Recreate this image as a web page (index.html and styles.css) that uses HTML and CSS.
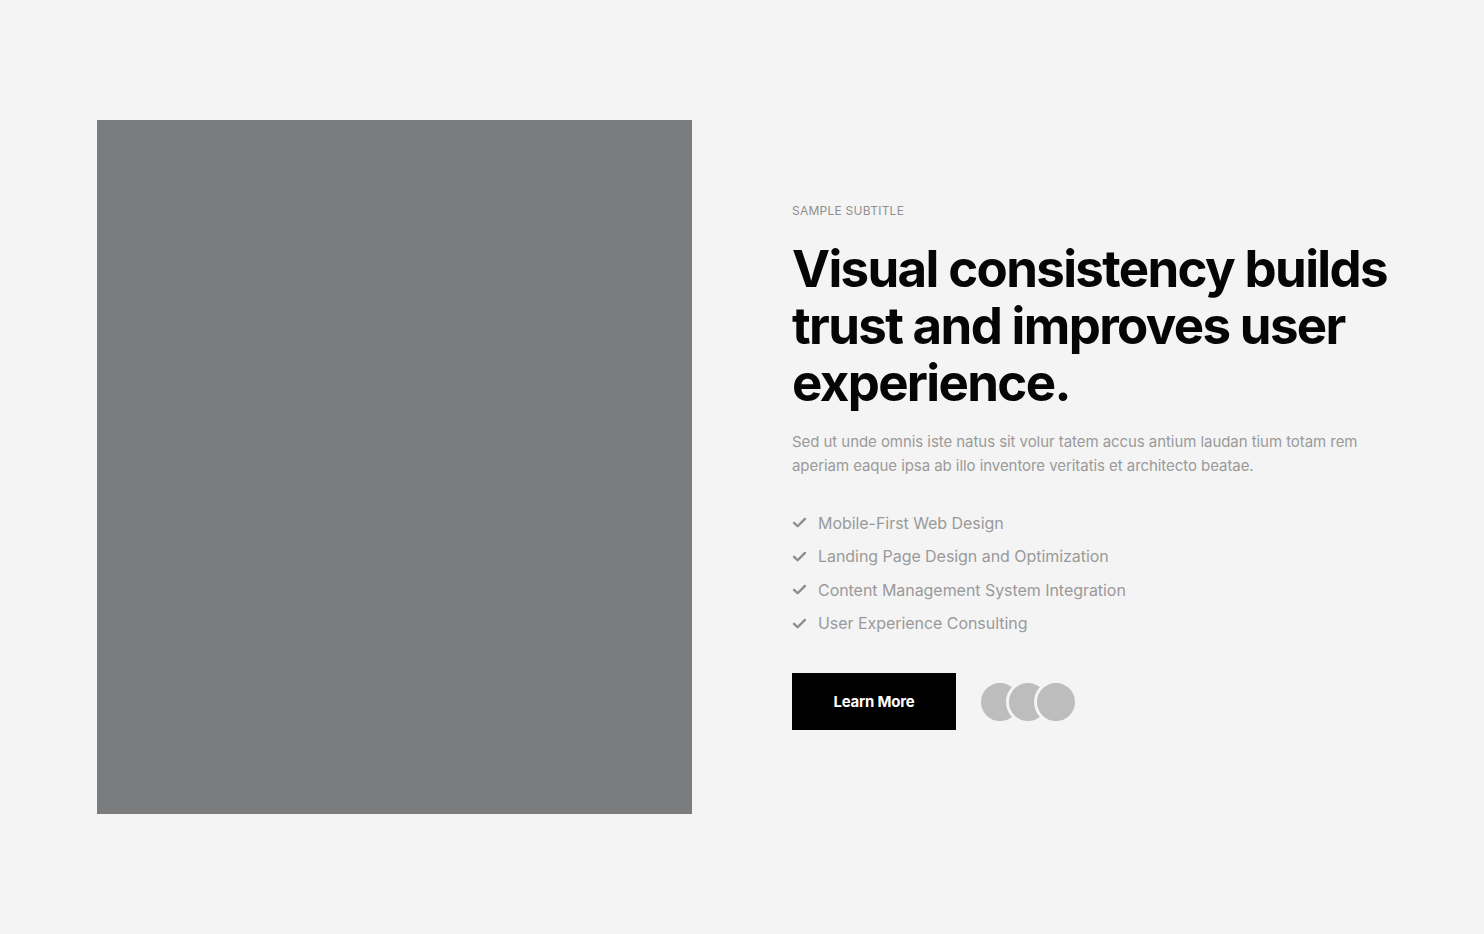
FILE: index.html
```html
<!DOCTYPE html>
<html lang="en">
<head>
<meta charset="utf-8">
<title>Visual consistency</title>
<link rel="stylesheet" href="styles.css">
</head>
<body>
<section class="hero">
  <div class="media"></div>
  <div class="content">
    <p class="subtitle">Sample Subtitle</p>
    <h1 class="title">Visual consistency builds trust and improves user experience.</h1>
    <p class="text">Sed ut unde omnis iste natus sit volur tatem accus antium laudan tium totam rem aperiam eaque ipsa ab illo inventore veritatis et architecto beatae.</p>
    <ul class="features">
      <li><svg class="check" viewBox="0 0 16 16" width="15" height="15"><path d="M2.2 8.3 L6 12 L13.8 4.2" fill="none" stroke="currentColor" stroke-width="2.6" stroke-linecap="round" stroke-linejoin="round"/></svg>Mobile-First Web Design</li>
      <li><svg class="check" viewBox="0 0 16 16" width="15" height="15"><path d="M2.2 8.3 L6 12 L13.8 4.2" fill="none" stroke="currentColor" stroke-width="2.6" stroke-linecap="round" stroke-linejoin="round"/></svg>Landing Page Design and Optimization</li>
      <li><svg class="check" viewBox="0 0 16 16" width="15" height="15"><path d="M2.2 8.3 L6 12 L13.8 4.2" fill="none" stroke="currentColor" stroke-width="2.6" stroke-linecap="round" stroke-linejoin="round"/></svg>Content Management System Integration</li>
      <li><svg class="check" viewBox="0 0 16 16" width="15" height="15"><path d="M2.2 8.3 L6 12 L13.8 4.2" fill="none" stroke="currentColor" stroke-width="2.6" stroke-linecap="round" stroke-linejoin="round"/></svg>User Experience Consulting</li>
    </ul>
    <div class="actions">
      <a class="btn" href="#">Learn More</a>
      <div class="avatars">
        <span class="avatar"></span>
        <span class="avatar"></span>
        <span class="avatar"></span>
      </div>
    </div>
  </div>
</section>
</body>
</html>
```

FILE: styles.css
```css
* { box-sizing: border-box; }
html, body { margin: 0; padding: 0; }
body {
  background: #f4f4f4;
  font-family: Inter, "Noto Sans", "Liberation Sans", sans-serif;
  color: #000;
  height: 934px;
}
.hero {
  display: grid;
  grid-template-columns: 595px 595px;
  column-gap: 100px;
  justify-content: center;
  align-items: center;
  padding: 120px 0;
}
.media {
  height: 694px;
  background: #7b7c7d;
}
.content {
  display: flex;
  flex-direction: column;
  align-items: flex-start;
}
.subtitle {
  margin: 0 0 22px;
  font-size: 12px;
  line-height: 14px;
  text-transform: uppercase;
  color: #8f8f8f;
  letter-spacing: 0.25px;
}
.title {
  margin: 0 0 19px;
  font-size: 51px;
  line-height: 57px;
  font-weight: 700;
  letter-spacing: -1.65px;
  color: #050505;
}
.text {
  margin: 0 0 33px;
  font-size: 15px;
  line-height: 24px;
  color: #9a9a9a;
  letter-spacing: -0.06px;
  width: 595px;
}
.features {
  list-style: none;
  margin: 0 0 38px;
  padding: 0;
  display: flex;
  flex-direction: column;
  gap: 9.5px;
}
.features li {
  display: flex;
  align-items: center;
  gap: 11px;
  font-size: 16px;
  line-height: 24px;
  color: #9a9a9a;
  letter-spacing: -0.05px;
}
.check { color: #8e8e8e; flex: none; }
.actions {
  display: flex;
  align-items: center;
  gap: 22px;
}
.btn {
  display: flex;
  align-items: center;
  justify-content: center;
  width: 164px;
  height: 57px;
  background: #000;
  color: #fff;
  font-size: 15px;
  font-weight: 700;
  text-decoration: none;
  letter-spacing: -0.2px;
}
.avatars { display: flex; }
.avatar {
  width: 44px;
  height: 44px;
  border-radius: 50%;
  background: #bdbdbe;
  border: 3px solid #f4f4f4;
}
.avatar + .avatar { margin-left: -16px; }
```
